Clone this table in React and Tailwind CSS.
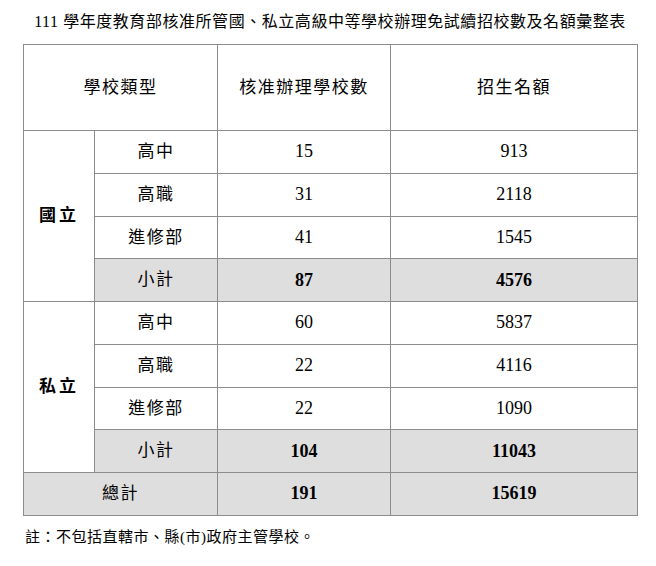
import React from 'react';

const font = { fontFamily: '"Liberation Serif", "Noto Sans CJK TC", serif' };

const groups = [
  {
    name: '國立',
    rows: [
      { type: '高中', schools: 15, quota: 913 },
      { type: '高職', schools: 31, quota: 2118 },
      { type: '進修部', schools: 41, quota: 1545 },
    ],
    subtotal: { schools: 87, quota: 4576 },
  },
  {
    name: '私立',
    rows: [
      { type: '高中', schools: 60, quota: 5837 },
      { type: '高職', schools: 22, quota: 4116 },
      { type: '進修部', schools: 22, quota: 1090 },
    ],
    subtotal: { schools: 104, quota: 11043 },
  },
];

const cell = 'border border-[#8c8c8c] text-center align-middle p-0';

export default function App() {
  return (
    <div className="w-[656px] h-[566px] bg-white text-black" style={font}>
      <div className="pt-[12px] w-[614px] ml-[23px] text-center text-[16px] leading-[20px] tracking-[0.55px]">
        111 學年度教育部核准所管國、私立高級中等學校辦理免試續招校數及名額彙整表
      </div>

      <table className="mt-[12px] ml-[23px] w-[614px] table-fixed border-collapse">
        <colgroup>
          <col className="w-[71px]" />
          <col className="w-[123px]" />
          <col className="w-[173px]" />
          <col className="w-[247px]" />
        </colgroup>

        {/* Header */}
        <thead>
          <tr className="h-[86px] text-[17px] tracking-[1.5px]">
            <th colSpan={2} className={`${cell} font-normal`}>學校類型</th>
            <th className={`${cell} font-normal`}>核准辦理學校數</th>
            <th className={`${cell} font-normal`}>招生名額</th>
          </tr>
        </thead>

        <tbody>
          {groups.map((g) => (
            <React.Fragment key={g.name}>
              {g.rows.map((r, i) => (
                <tr key={r.type} className="h-[42.75px]">
                  {i === 0 && (
                    <td rowSpan={4} className={`${cell} text-[17px] font-bold tracking-[3px]`}>
                      {g.name}
                    </td>
                  )}
                  <td className={`${cell} text-[17px] tracking-[1.5px]`}>{r.type}</td>
                  <td className={`${cell} text-[18px]`}>{r.schools}</td>
                  <td className={`${cell} text-[18px]`}>{r.quota}</td>
                </tr>
              ))}
              <tr className="h-[42.75px] bg-[#dedede]">
                <td className={`${cell} text-[17px] tracking-[1.5px]`}>小計</td>
                <td className={`${cell} text-[18px] font-bold`}>{g.subtotal.schools}</td>
                <td className={`${cell} text-[18px] font-bold`}>{g.subtotal.quota}</td>
              </tr>
            </React.Fragment>
          ))}
          <tr className="h-[42.75px] bg-[#dedede]">
            <td colSpan={2} className={`${cell} text-[17px] tracking-[1.5px]`}>總計</td>
            <td className={`${cell} text-[18px] font-bold`}>191</td>
            <td className={`${cell} text-[18px] font-bold`}>15619</td>
          </tr>
        </tbody>
      </table>

      <div className="mt-[11px] ml-[25px] text-[15px] leading-[20px] tracking-[0.5px]">
        註：不包括直轄市、縣(市)政府主管學校。
      </div>
    </div>
  );
}
